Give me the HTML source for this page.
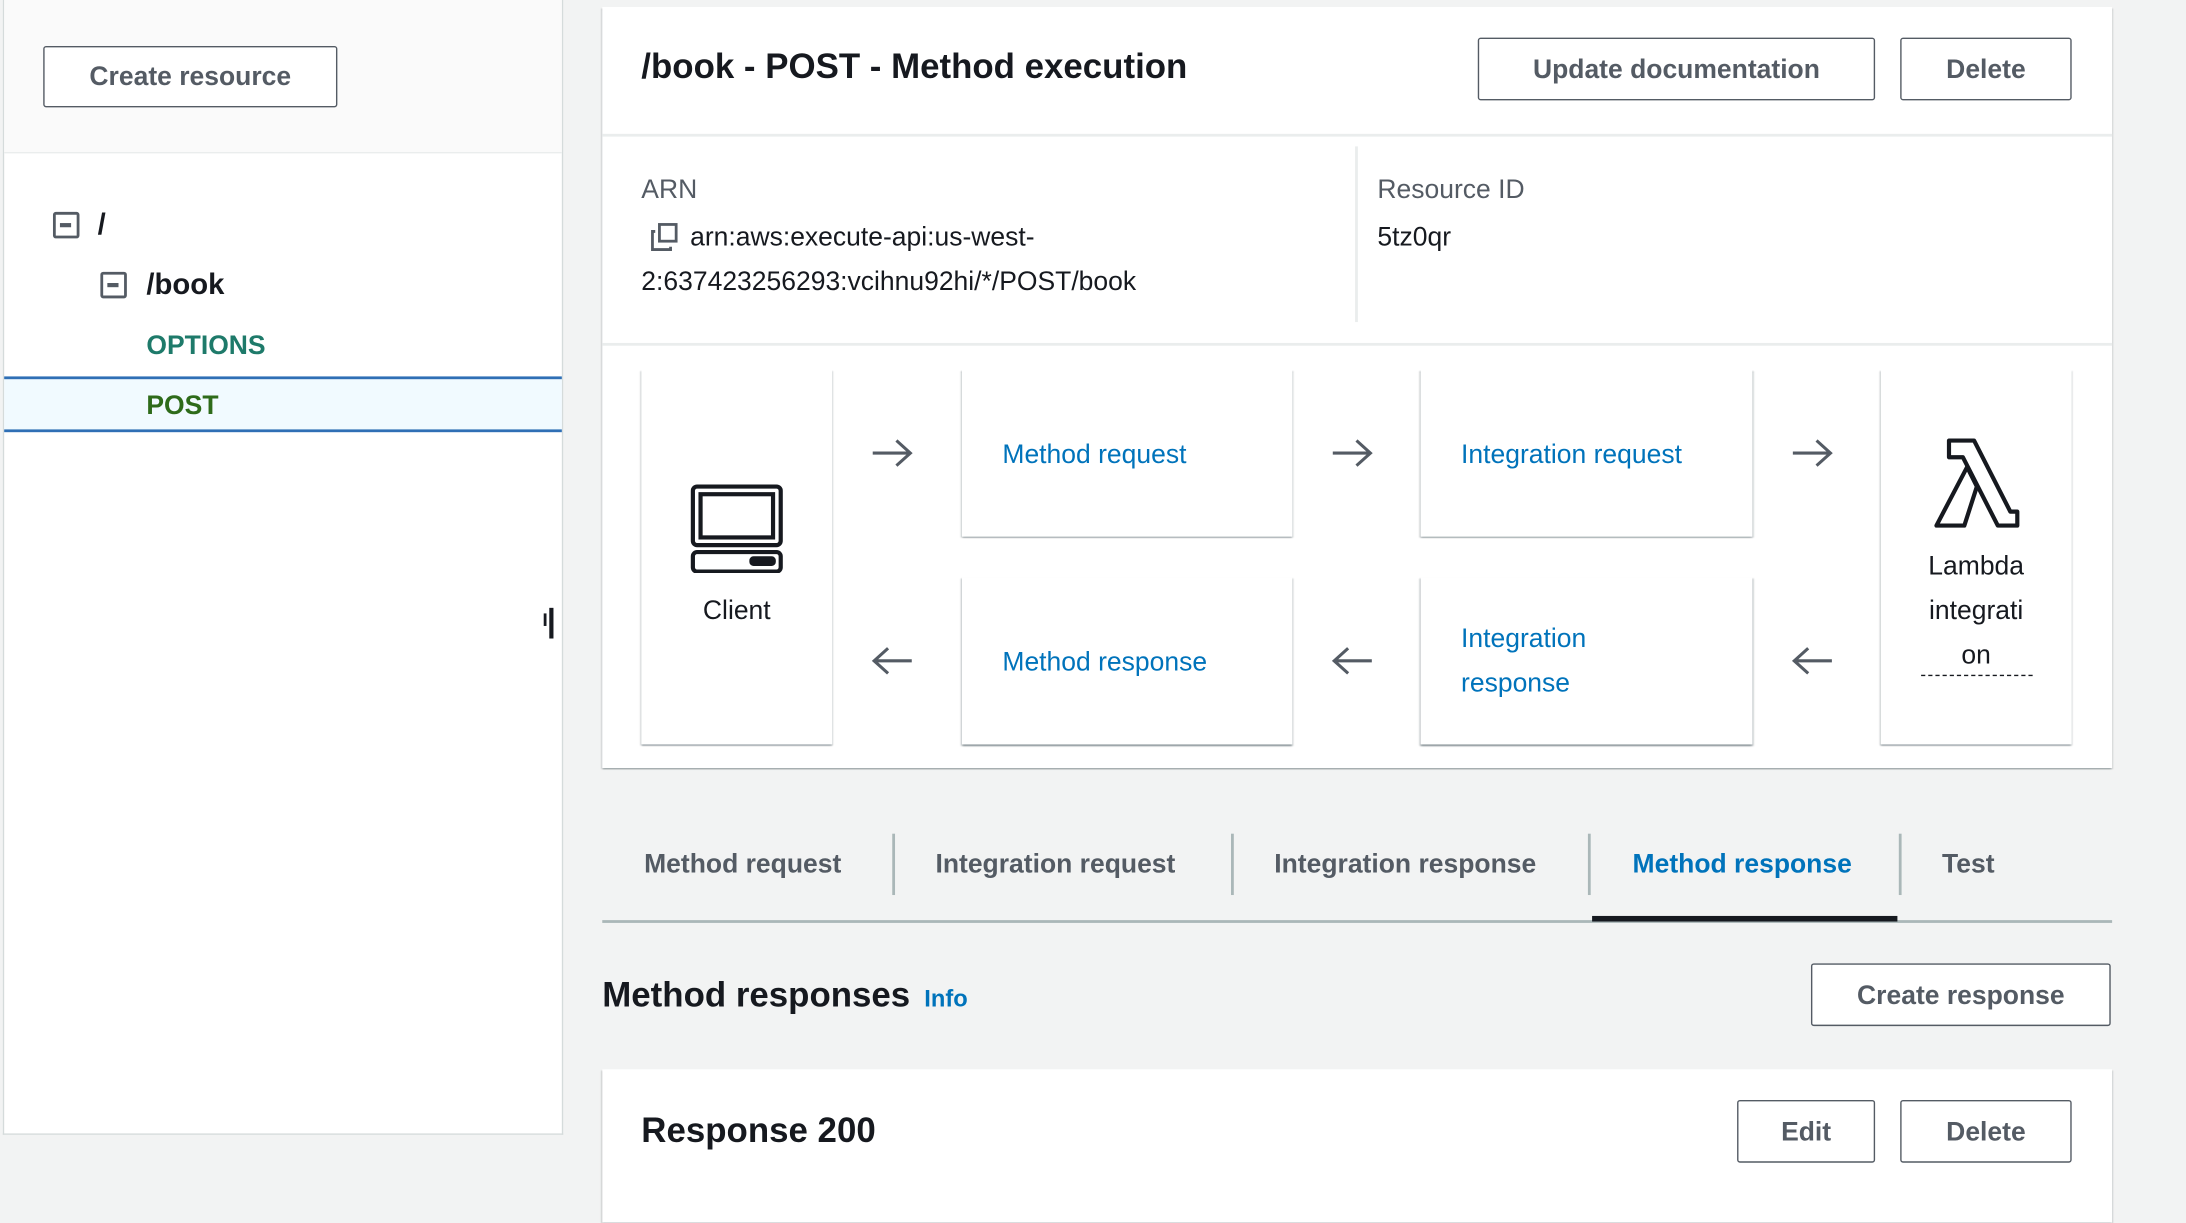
<!DOCTYPE html>
<html><head><meta charset="utf-8">
<style>
*{box-sizing:border-box;margin:0;padding:0}
html,body{width:2186px;height:1206px;overflow:hidden;background:#f2f3f3}
#w{position:absolute;left:0;top:0;width:1568px;height:865px;transform:scale(1.39413);transform-origin:0 0;font-family:"Liberation Sans",sans-serif;color:#16191f}
.a{position:absolute}
.btn{position:absolute;border:1.5px solid #545b64;border-radius:2px;background:#fff;color:#545b64;font-weight:bold;font-size:19px;display:flex;align-items:center;justify-content:center;padding-top:2px}
.box{position:absolute;background:#fff;box-shadow:0 1px 1px rgba(0,28,36,.3),1px 1px 1px rgba(0,28,36,.15),-1px 1px 1px rgba(0,28,36,.15);font-size:19px;color:#0073bb}
.arr{position:absolute}
.minus{position:absolute;width:19px;height:19px;border:2.5px solid #545b64;border-radius:2px}
.minus:after{content:"";position:absolute;left:3px;top:6px;width:8px;height:2.5px;background:#545b64}
.tab{position:absolute;top:610px;font-size:19px;font-weight:bold;color:#545b64}
.sep{position:absolute;top:598px;width:1.5px;height:44px;background:#aab7b8}
</style></head><body><div id="w">
<div class="a" style="left:2px;top:0;width:402px;height:814px;background:#fff;border-right:1.5px solid #d5dbdb;border-bottom:1.5px solid #d5dbdb;border-left:1px solid #d5dbdb"></div>
<div class="a" style="left:3px;top:0;width:400px;height:110px;background:#fafafa;border-bottom:1.5px solid #eaeded"></div>
<div class="btn" style="left:31px;top:33px;width:211px;height:44px">Create resource</div>
<div class="minus" style="left:38px;top:152px"></div>
<div class="a" style="left:70px;top:150px;font-size:21px;font-weight:bold">/</div>
<div class="minus" style="left:72px;top:195px"></div>
<div class="a" style="left:105px;top:193px;font-size:21px;font-weight:bold">/book</div>
<div class="a" style="left:105px;top:238px;font-size:19px;font-weight:bold;color:#1e7a6a">OPTIONS</div>
<div class="a" style="left:3px;top:270px;width:400px;height:40px;background:#f1faff;border-top:2px solid #2f6fb5;border-bottom:2px solid #2f6fb5"></div>
<div class="a" style="left:105px;top:281px;font-size:19px;font-weight:bold;color:#2e6b1a">POST</div>
<div class="a" style="left:390px;top:440px;width:2px;height:9px;background:#16191f"></div>
<div class="a" style="left:394px;top:436px;width:3px;height:22px;background:#16191f"></div>

<div class="box" style="left:432px;top:5px;width:1083px;height:546px;color:#16191f"></div>
<div class="a" style="left:460px;top:34px;font-size:25px;font-weight:bold">/book - POST - Method execution</div>
<div class="btn" style="left:1060px;top:27px;width:285px;height:45px">Update documentation</div>
<div class="btn" style="left:1363px;top:27px;width:123px;height:45px">Delete</div>
<div class="a" style="left:432px;top:96px;width:1083px;height:1.5px;background:#eaeded"></div>
<div class="a" style="left:460px;top:126px;font-size:19px;color:#545b64">ARN</div>
<svg class="a" style="left:467px;top:160px" width="20" height="20" viewBox="0 0 20 20" fill="none" stroke="#545b64" stroke-width="2"><rect x="6" y="1" width="12" height="12"/><path d="M3 6H1v13h13v-2"/></svg>
<div class="a" style="left:460px;top:155px;font-size:19px;line-height:32px;width:500px;text-indent:35px">arn:aws:execute-api:us-west-2:637423256293:vcihnu92hi/*/POST/book</div>
<div class="a" style="left:972px;top:105px;width:1.5px;height:126px;background:#eaeded"></div>
<div class="a" style="left:988px;top:126px;font-size:19px;color:#545b64">Resource ID</div>
<div class="a" style="left:988px;top:160px;font-size:19px">5tz0qr</div>
<div class="a" style="left:432px;top:246px;width:1083px;height:1.5px;background:#eaeded"></div>

<div class="box" style="left:460px;top:265px;width:137px;height:269px;color:#16191f"></div>
<svg class="a" style="left:495px;top:347px" width="67" height="64" viewBox="0 0 67 64" fill="none" stroke="#16191f" stroke-width="3"><rect x="2" y="2" width="63" height="42" rx="3"/><rect x="7.5" y="7.5" width="52" height="31"/><rect x="2" y="49" width="63" height="14" rx="3"/><rect x="44" y="53.5" width="16" height="4" fill="#16191f" rx="1.5"/></svg>
<div class="a" style="left:460px;top:428px;width:137px;text-align:center;font-size:19px">Client</div>

<svg class="arr" style="left:624px;top:314px" width="32" height="22" viewBox="0 0 32 22" fill="none" stroke="#545b64" stroke-width="2.2"><path d="M2 11H29M19 2l10 9-10 9"/></svg>
<svg class="arr" style="left:954px;top:314px" width="32" height="22" viewBox="0 0 32 22" fill="none" stroke="#545b64" stroke-width="2.2"><path d="M2 11H29M19 2l10 9-10 9"/></svg>
<svg class="arr" style="left:1284px;top:314px" width="32" height="22" viewBox="0 0 32 22" fill="none" stroke="#545b64" stroke-width="2.2"><path d="M2 11H29M19 2l10 9-10 9"/></svg>
<svg class="arr" style="left:624px;top:463px" width="32" height="22" viewBox="0 0 32 22" fill="none" stroke="#545b64" stroke-width="2.2"><path d="M30 11H3M13 2L3 11l10 9"/></svg>
<svg class="arr" style="left:954px;top:463px" width="32" height="22" viewBox="0 0 32 22" fill="none" stroke="#545b64" stroke-width="2.2"><path d="M30 11H3M13 2L3 11l10 9"/></svg>
<svg class="arr" style="left:1284px;top:463px" width="32" height="22" viewBox="0 0 32 22" fill="none" stroke="#545b64" stroke-width="2.2"><path d="M30 11H3M13 2L3 11l10 9"/></svg>

<div class="box" style="left:690px;top:265px;width:237px;height:120px"><div class="a" style="left:29px;top:51px">Method request</div></div>
<div class="box" style="left:1019px;top:265px;width:238px;height:120px"><div class="a" style="left:29px;top:51px">Integration request</div></div>
<div class="box" style="left:690px;top:414px;width:237px;height:120px"><div class="a" style="left:29px;top:51px">Method response</div></div>
<div class="box" style="left:1019px;top:414px;width:238px;height:120px"><div class="a" style="left:29px;top:29px;line-height:32px">Integration<br>response</div></div>

<div class="box" style="left:1349px;top:265px;width:137px;height:269px;color:#16191f"></div>
<svg class="a" style="left:1387px;top:314px" width="62" height="66" viewBox="0 0 62 66" fill="none" stroke="#16191f" stroke-width="3" stroke-linejoin="round"><path d="M11 2H29L55 53H60V63H46L21 14H11Z"/><path d="M2 63L24 21L31 35L22 63Z"/></svg>
<div class="a" style="left:1349px;top:391px;width:137px;text-align:center;font-size:19px;line-height:32px">Lambda<br>integrati<br>on</div>
<div class="a" style="left:1378px;top:484px;width:80px;border-top:1.5px dashed #16191f"></div>

<div class="tab" style="left:462px">Method request</div>
<div class="sep" style="left:640px"></div>
<div class="tab" style="left:671px">Integration request</div>
<div class="sep" style="left:883px"></div>
<div class="tab" style="left:914px">Integration response</div>
<div class="sep" style="left:1139px"></div>
<div class="tab" style="left:1171px;color:#0073bb">Method response</div>
<div class="sep" style="left:1362px"></div>
<div class="tab" style="left:1393px">Test</div>
<div class="a" style="left:432px;top:660px;width:1083px;height:1.5px;background:#aab7b8"></div>
<div class="a" style="left:1142px;top:657px;width:219px;height:4px;background:#16191f"></div>

<div class="a" style="left:432px;top:700px;font-size:25px;font-weight:bold">Method responses</div>
<div class="a" style="left:663px;top:707px;font-size:17px;font-weight:bold;color:#0073bb">Info</div>
<div class="btn" style="left:1299px;top:691px;width:215px;height:45px">Create response</div>

<div class="box" style="left:432px;top:767px;width:1083px;height:110px"></div>
<div class="a" style="left:460px;top:797px;font-size:25px;font-weight:bold">Response 200</div>
<div class="btn" style="left:1246px;top:789px;width:99px;height:45px">Edit</div>
<div class="btn" style="left:1363px;top:789px;width:123px;height:45px">Delete</div>
</div></body></html>
